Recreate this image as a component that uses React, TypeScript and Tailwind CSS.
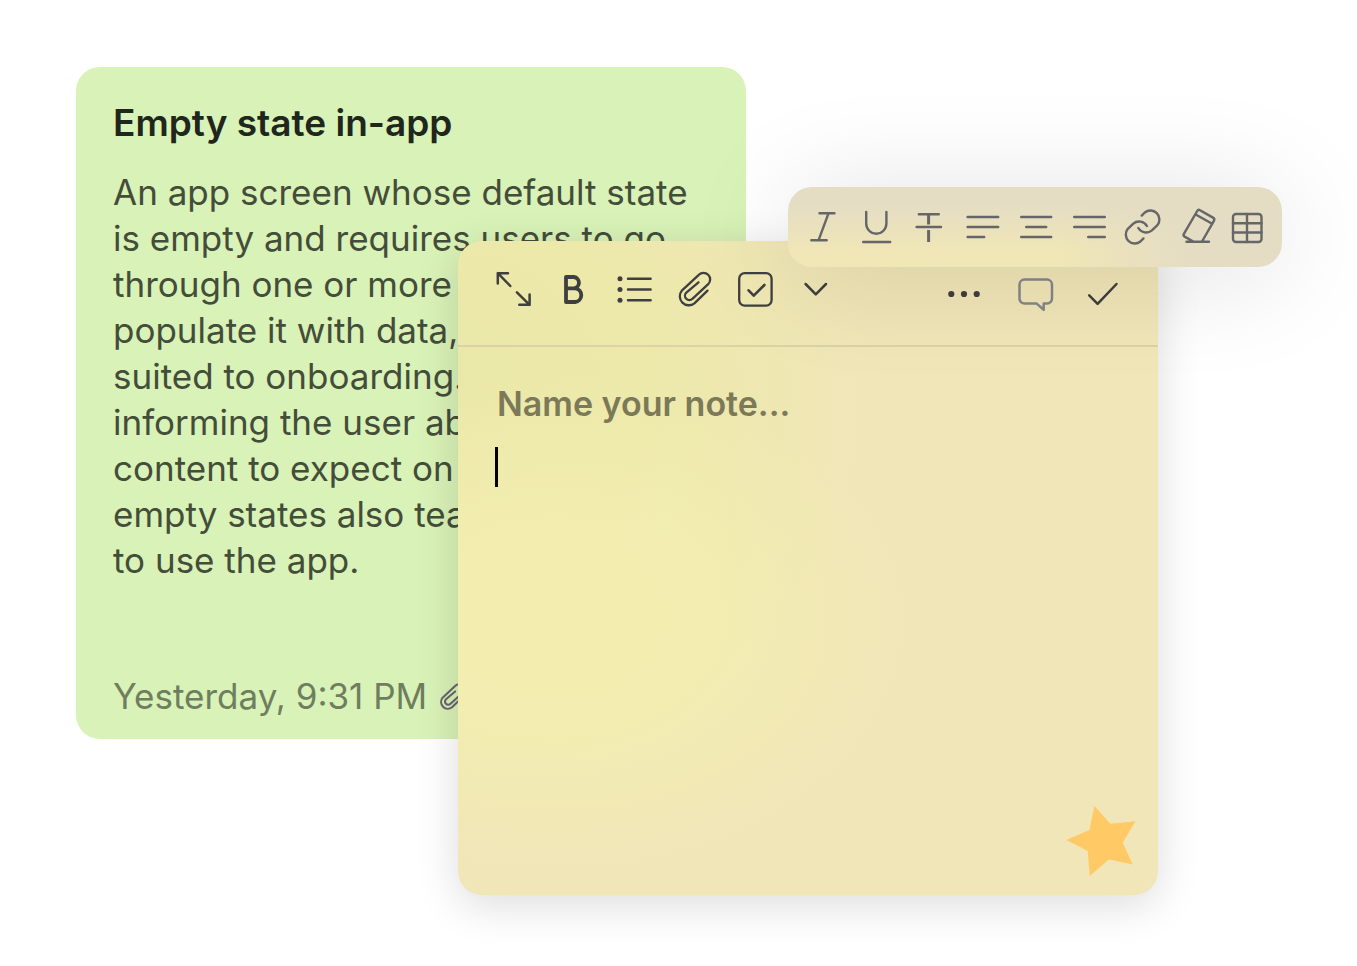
import type { ReactNode } from "react";

interface IconProps {
  size?: number;
  weight?: number;
  children: ReactNode;
}

function Icon({ size = 40, weight = 2, children }: IconProps) {
  return (
    <svg
      width={size}
      height={size}
      viewBox={`0 0 ${size} ${size}`}
      fill="none"
      stroke="currentColor"
      strokeWidth={weight}
      strokeLinecap="round"
      strokeLinejoin="round"
      className="block overflow-visible"
      aria-hidden="true"
    >
      {children}
    </svg>
  );
}

const CLIP_PATH =
  "M31.5 19.6 18.4 32.3A9 9 0 0 1 5.8 19.6L22.8 3.8a6.6 6.6 0 0 1 9.4 9.4L16.4 27.8a4.3 4.3 0 0 1-6.1-6.2L22.5 11.3";

const EDIT_TOOLS = [
  {
    label: "Expand note",
    icon: (
      <path d="M12 2.2H1.8V12.4M1.8 2.2 14.3 15M23.3 33.8H33.6V23.6M33.6 33.8 20.9 21.3" />
    ),
    weight: 2.5,
  },
  {
    label: "Bold",
    icon: (
      <path d="M10 6V31H19.2a6.9 6.9 0 0 0 0-13.7H10M10 6h8a5.7 5.7 0 0 1 0 11.3" />
    ),
    weight: 3.8,
  },
  {
    label: "Bulleted list",
    icon: (
      <>
        <g fill="currentColor" stroke="none">
          <circle cx="4" cy="7.7" r="2.5" />
          <circle cx="4" cy="18.5" r="2.5" />
          <circle cx="4" cy="29.3" r="2.5" />
        </g>
        <path d="M12 7.7H34.6M12 18.5H34.6M12 29.3H34.6" />
      </>
    ),
    weight: 2.5,
  },
  { label: "Attach file", icon: <path d={CLIP_PATH} />, weight: 2.3 },
  {
    label: "Checklist",
    icon: (
      <>
        <rect x="3.2" y="2.2" width="32.4" height="32.4" rx="5.5" />
        <path d="m12.6 19.3 5.1 5.4L28.4 14" strokeWidth="2.6" />
      </>
    ),
    weight: 2.3,
  },
  {
    label: "More formatting",
    icon: <path d="m9.6 13 10.2 10.4L30 13" />,
    weight: 2.5,
  },
];

const NOTE_ACTIONS = [
  {
    label: "More options",
    icon: (
      <g fill="currentColor" stroke="none">
        <circle cx="5.3" cy="21" r="3.1" />
        <circle cx="18" cy="21" r="3.1" />
        <circle cx="30.7" cy="21" r="3.1" />
      </g>
    ),
    color: "text-[#3f3f40]",
  },
  {
    label: "Comments",
    icon: (
      <path d="M10.5 6.6H33a5 5 0 0 1 5 5v14a5 5 0 0 1-5 5H29.7v6.2L22.7 30.6H10.5a5 5 0 0 1-5-5V11.6a5 5 0 0 1 5-5z" />
    ),
    color: "text-[#87878a]",
  },
  {
    label: "Done",
    icon: <path d="m7.2 22.3 8.4 8.5L34.5 11" />,
    color: "text-[#3f3f40]",
  },
];

const FORMAT_TOOLS = [
  { label: "Italic", icon: <path d="M16.5 6.3H31.5M8.3 33.3H23.7M25.5 6.3 15.5 33.3" /> },
  {
    label: "Underline",
    icon: <path d="M10.2 5V16.6a10.1 10.1 0 0 0 20.2 0V5M7.2 35H34.2" />,
  },
  {
    label: "Strikethrough",
    icon: (
      <>
        <path d="M9.8 7.3H29.8M7.6 20H32" />
        <path d="M19.6 8V17.5M19.6 23V35" strokeWidth="3" strokeLinecap="butt" />
      </>
    ),
  },
  { label: "Align left", icon: <path d="M5.6 10H36.2M5.6 20H36.2M5.6 30H22.2" /> },
  { label: "Align center", icon: <path d="M6.2 10H36.2M11.2 20H31.2M6.2 30H36.2" /> },
  { label: "Align right", icon: <path d="M6.2 10H36.8M6.2 20H36.8M20.2 30H36.8" /> },
  {
    label: "Insert link",
    icon: (
      <path d="M20.7 8.6 23.8 5.5A9 9 0 0 1 36.4 18.2L30.9 23.4A9 9 0 0 1 17.3 21M22.5 31.4 19.4 34.5A9 9 0 0 1 6.8 21.8L12.3 16.6A9 9 0 0 1 25.9 19" />
    ),
  },
  {
    label: "Clear formatting",
    icon: (
      <path d="M26 3.2 39 10.6Q41 11.8 39.9 13.8L28 34.5M19.3 34.5 10.6 29.6Q8.9 28.6 9.9 26.8L23.2 4Q24.3 2.2 26 3.2M21.7 7.5 37.7 16.5M12.5 34.7H35" />
    ),
  },
  {
    label: "Insert table",
    icon: (
      <>
        <rect x="6" y="7" width="28.5" height="28" rx="3" />
        <path d="M20 7V35M6 16.2H34.5M6 25.5H34.5" />
      </>
    ),
  },
];

const NOTE_LINES = [
  "An app screen whose default state",
  "is empty and requires users to go",
  "through one or more steps to",
  "populate it with data, is well",
  "suited to onboarding. Besides",
  "informing the user about the",
  "content to expect on it,",
  "empty states also teach how",
  "to use the app.",
];

function SavedNote() {
  return (
    <article className="flex min-h-[672px] w-[670px] flex-col rounded-3xl bg-[#d9f2b7] pt-8 pr-8 pb-[21px] pl-[37px]">
      <h2 className="text-[37px] leading-[48px] font-semibold text-[#21261c]">
        Empty state in-app
      </h2>
      <p className="mt-[22px] text-[35px] leading-[46px] whitespace-nowrap text-[#444d39]">
        {NOTE_LINES.map((line) => (
          <span key={line} className="block">
            {line}
          </span>
        ))}
      </p>
      <footer className="mt-auto flex items-center gap-3 text-[#6e7e5e]">
        <time className="text-[35px] leading-[44px]">Yesterday, 9:31 PM</time>
        <svg
          width="27"
          height="27"
          viewBox="1 0 36 36"
          fill="none"
          stroke="currentColor"
          strokeWidth="2.8"
          strokeLinecap="round"
          strokeLinejoin="round"
          className="text-[#69646e]"
          aria-hidden="true"
        >
          <path d={CLIP_PATH} />
        </svg>
      </footer>
    </article>
  );
}

function NoteEditor() {
  return (
    <section className="absolute top-[241px] left-[458px] flex h-[654px] w-[700px] flex-col rounded-3xl bg-[#f1e6b8] bg-[radial-gradient(ellipse_50%_38%_at_14%_58%,#f3eeb0_0%,#f3eeb0_30%,#f3eeb000_100%),radial-gradient(ellipse_58%_62%_at_0%_24%,#eae8a9_0%,#ece9aa_45%,#f1e6b800_100%)] shadow-[0_10px_44px_rgba(0,0,0,0.14)]">
      <header className="flex h-[106px] shrink-0 items-center justify-between border-b-2 border-[#dbd3a3] pr-9 pl-[38px]">
        <div className="mb-2 flex gap-6 text-[#3f3f40]">
          {EDIT_TOOLS.map((tool) => (
            <button key={tool.label} type="button" aria-label={tool.label}>
              <Icon size={36} weight={tool.weight}>
                {tool.icon}
              </Icon>
            </button>
          ))}
        </div>
        <div className="flex gap-7">
          {NOTE_ACTIONS.map((action) => (
            <button
              key={action.label}
              type="button"
              aria-label={action.label}
              className={action.color}
            >
              <Icon weight={2.5}>{action.icon}</Icon>
            </button>
          ))}
        </div>
      </header>
      <div className="flex flex-1 flex-col pt-[33px] pr-9 pl-[37px]">
        <input
          type="text"
          aria-label="Note title"
          placeholder="Name your note..."
          className="w-full bg-transparent pl-0.5 text-[34px] leading-[48px] font-semibold text-[#21261c] outline-none placeholder:text-[#7b7958]"
        />
        {/* Text cursor */}
        <div className="mt-[19px] flex flex-1 gap-1">
          <span className="h-10 w-[3px] bg-black" />
          <textarea
            aria-label="Note text"
            className="flex-1 resize-none bg-transparent text-[34px] leading-10 text-[#444d39] outline-none"
          />
        </div>
      </div>
      <svg
        width="70"
        height="70"
        viewBox="51 50 207 208"
        className="absolute right-[22px] bottom-[19px]"
        aria-hidden="true"
      >
        <path
          fill="#ffca66"
          d="M135 50 182 103 257 95 219 159 249 224 178 209 121 258 115 184 51 151 120 121z"
        />
      </svg>
    </section>
  );
}

function FormatBar() {
  return (
    <div
      role="toolbar"
      aria-label="Text formatting"
      className="absolute top-[187px] left-[788px] flex h-20 items-center gap-[13px] rounded-3xl bg-[linear-gradient(to_right,#e4ddc400_55%,#e4ddc4_82%),linear-gradient(to_bottom,#e4ddc4_20%,#f0e6b6_80%)] px-[15px] text-[#666668] shadow-[0_8px_110px_rgba(0,0,0,0.13)]"
    >
      {FORMAT_TOOLS.map((tool) => (
        <button key={tool.label} type="button" aria-label={tool.label}>
          <Icon weight={2.4}>{tool.icon}</Icon>
        </button>
      ))}
    </div>
  );
}

export default function App() {
  return (
    <main className="relative min-h-screen overflow-hidden bg-white pt-[67px] pl-[76px] font-[Inter,'Liberation_Sans',sans-serif]">
      <SavedNote />
      <NoteEditor />
      <FormatBar />
    </main>
  );
}
